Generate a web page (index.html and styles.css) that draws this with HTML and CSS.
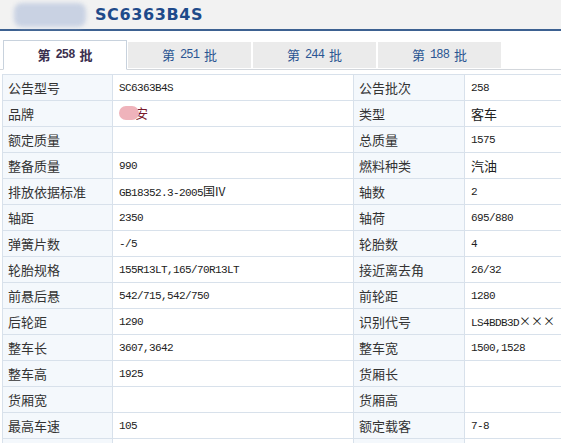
FILE: index.html
```html
<!DOCTYPE html>
<html lang="zh-CN">
<head>
<meta charset="utf-8">
<title>SC6363B4S</title>
<link rel="stylesheet" href="styles.css">
</head>
<body>
<div class="page">
  <header class="top">
    <div class="logo"><span class="blob"></span></div>
    <h1 class="title">SC6363B4S</h1>
  </header>
  <nav class="tabs">
    <a class="tab active">第 <span class="num">258</span> 批</a>
    <a class="tab">第 <span class="num">251</span> 批</a>
    <a class="tab">第 <span class="num">244</span> 批</a>
    <a class="tab">第 <span class="num">188</span> 批</a>
  </nav>
  <table class="spec">
    <colgroup><col class="c1"><col class="c2"><col class="c3"><col class="c4"></colgroup>
    <tr><th>公告型号</th><td class="m">SC6363B4S</td><th>公告批次</th><td class="m">258</td></tr>
    <tr><th>品牌</th><td><span class="brand"><span class="mask"></span>安</span></td><th>类型</th><td>客车</td></tr>
    <tr><th>额定质量</th><td></td><th>总质量</th><td class="m">1575</td></tr>
    <tr><th>整备质量</th><td class="m">990</td><th>燃料种类</th><td>汽油</td></tr>
    <tr><th>排放依据标准</th><td class="m">GB18352.3-2005<span class="cn">国IV</span></td><th>轴数</th><td class="m">2</td></tr>
    <tr><th>轴距</th><td class="m">2350</td><th>轴荷</th><td class="m">695/880</td></tr>
    <tr><th>弹簧片数</th><td class="m">-/5</td><th>轮胎数</th><td class="m">4</td></tr>
    <tr><th>轮胎规格</th><td class="m">155R13LT,165/70R13LT</td><th>接近离去角</th><td class="m">26/32</td></tr>
    <tr><th>前悬后悬</th><td class="m">542/715,542/750</td><th>前轮距</th><td class="m">1280</td></tr>
    <tr><th>后轮距</th><td class="m">1290</td><th>识别代号</th><td class="m">LS4BDB3D<span class="cn">×××</span></td></tr>
    <tr><th>整车长</th><td class="m">3607,3642</td><th>整车宽</th><td class="m">1500,1528</td></tr>
    <tr><th>整车高</th><td class="m">1925</td><th>货厢长</th><td></td></tr>
    <tr><th>货厢宽</th><td></td><th>货厢高</th><td></td></tr>
    <tr><th>最高车速</th><td class="m">105</td><th>额定载客</th><td class="m">7-8</td></tr>
    <tr><th></th><td></td><th></th><td></td></tr>
  </table>
</div>
</body>
</html>
```
FILE: styles.css
```css
html, body {
  margin: 0;
  padding: 0;
  overflow: hidden;
  background: #fff;
}
body {
  font-family: "Noto Sans CJK SC", "DejaVu Sans", sans-serif;
  color: #333;
}
.page {
  width: 561px;
  height: 443px;
  overflow: hidden;
}
.top {
  height: 29px;
  background: #f2f2f2;
  border-bottom: 2px solid #3d6191;
  display: flex;
  align-items: center;
}
.logo {
  width: 72px;
  height: 24px;
  margin-left: 14px;
  margin-right: 9px;
  display: flex;
}
.blob {
  flex: 1;
  background: #c9d2e3;
  border-radius: 8px;
  filter: blur(2px);
}
.title {
  margin: 0;
  font-family: "DejaVu Sans", sans-serif;
  font-weight: bold;
  font-size: 16px;
  letter-spacing: 0.6px;
  color: #1e4a8a;
  line-height: 1;
}
.tabs {
  display: flex;
  align-items: flex-end;
  margin-top: 9px;
  padding-left: 3px;
  height: 29px;
  border-bottom: 1px solid #d3d7dc;
  gap: 2px;
}
.tab {
  width: 123px;
  height: 26px;
  margin-bottom: 1px;
  background: #ebebeb;
  color: #2a5592;
  font-size: 13px;
  line-height: 16px;
  display: flex;
  align-items: center;
  justify-content: center;
  white-space: pre;
}
.tab.active {
  width: 122px;
  height: 28px;
  margin-bottom: -1px;
  margin-right: -1px;
  background: #fff;
  border: 1px solid #c8d2dd;
  border-bottom: 1px solid #fff;
  color: #3b2f4e;
  font-weight: bold;
}
.num {
  font-family: "Liberation Mono", monospace;
  font-size: 12px;
  letter-spacing: -0.8px;
  margin: 0 2px;
}
.spec {
  margin-top: 4px;
  margin-left: 2px;
  border-collapse: collapse;
  table-layout: fixed;
  width: 620px;
}
.c1 { width: 110px; }
.c2 { width: 241px; }
.c3 { width: 111px; }
.c4 { width: 158px; }
.spec th, .spec td {
  height: 25px;
  border: 1px solid #d8e1eb;
  padding: 0 0 0 5px;
  font-size: 13px;
  font-weight: normal;
  text-align: left;
  white-space: nowrap;
  overflow: hidden;
  line-height: 16px;
}
.spec th {
  background: #f4f8fc;
  color: #333;
}
.spec td {
  background: #fff;
  color: #222;
  padding-left: 6px;
}
.spec td.m {
  font-family: "Liberation Mono", monospace;
  font-size: 11px;
  letter-spacing: -0.6px;
}
.cn {
  font-family: "Noto Sans CJK SC", sans-serif;
  font-size: 12px;
  letter-spacing: 0;
}
.brand {
  display: inline-flex;
  align-items: center;
  color: #7a1a2a;
}
.mask {
  display: inline-block;
  width: 20px;
  height: 14px;
  background: #efb3bb;
  border-radius: 7px;
  margin-right: -4px;
  filter: blur(0.6px);
}
```
